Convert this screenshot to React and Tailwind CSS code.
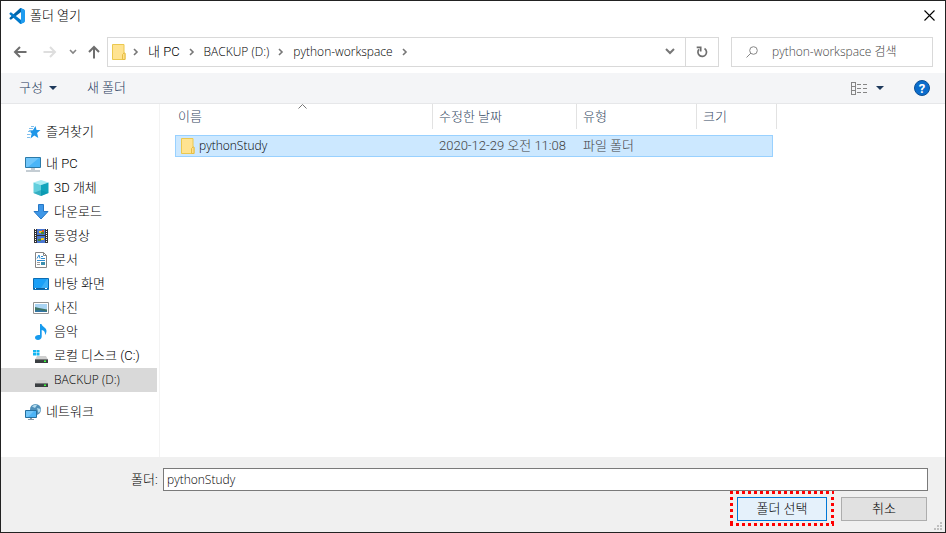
import React from "react";

const VsCodeLogo = () => (
  <svg width="16" height="16" viewBox="0 0 100 100" aria-hidden="true">
    <path d="M96 11 76 1c-2-1-5-1-7 1L4 61c-2 2-2 4 0 6l5 5c1 1 4 2 5 0l78-59c3-2 4-2 4-2z" fill="#0065a9" />
    <path d="M96 89 76 99c-2 1-5 1-7-1L4 39c-2-2-2-4 0-6l5-5c1-1 4-2 5 0l78 59c3 2 4 2 4 2z" fill="#007acc" />
    <path d="M76 99c-2 1-5 1-7-1 2 2 6 1 6-3V5c0-4-4-5-6-3 2-2 5-2 7-1l20 10c2 1 4 3 4 6v66c0 3-2 5-4 6z" fill="#1f9cf0" />
  </svg>
);

const Arrow = ({ className, d }) => (
  <svg width="14" height="14" viewBox="0 0 14 14" fill="none" stroke="currentColor" strokeWidth="2" className={className} aria-hidden="true">
    <path d={d} />
  </svg>
);

const Crumb = () => (
  <svg width="6" height="8" viewBox="0 0 6 8" fill="none" stroke="#777" strokeWidth="1.6" className="shrink-0" aria-hidden="true">
    <path d="M1 1l3 3-3 3" />
  </svg>
);

const Caret = () => (
  <svg width="8" height="4" viewBox="0 0 8 4" fill="#1e395b" aria-hidden="true">
    <path d="M0 0h8L4 4z" />
  </svg>
);

const Folder = () => (
  <svg width="14" height="16" viewBox="0 0 14 16" className="shrink-0" aria-hidden="true">
    <path d="M.5.5h11.500v9h1v6H.5z" fill="#ffe391" stroke="#ebc84f" />
    <path d="M10.500 15.500V10.500l1.500-1.500h1v6.500z" fill="#ffe08a" stroke="#e6bd42" />
  </svg>
);

const Icon = ({ children }) => (
  <svg width="16" height="16" viewBox="0 0 16 16" className="shrink-0" aria-hidden="true">{children}</svg>
);

const Drive = () => (
  <>
    <path d="M4 8h9l2 3.500H2z" fill="#cfcfcf" />
    <path d="M2 11h13v4H2z" fill="#3b3f42" />
    <path d="M2 11h13v1H2z" fill="#77797b" />
    <path d="M11 12.500h2v1.500h-2z" fill="#3cff3c" />
  </>
);

const icons = {
  star: (
    <Icon>
      <path d="M10.500 2l1 4 4 0-3.400 3 1.200 5-4-2.500L5.500 14.500l1.200-5-3-3 4.200-.3z" fill="#1e96e8" />
      <path d="M4 4.500h4M3 7.500h3M2 10.500h3.500M6 2.500h3M2 13.500h3" stroke="#7fbfec" />
    </Icon>
  ),
  pc: (
    <Icon>
      <path d="M.5 1.500h15v10H.5z" fill="#4bb5f7" stroke="#2c7aa8" />
      <path d="M1 2h13L3 11H1z" fill="#8ad2fb" opacity=".6" />
      <path d="M1 15h14M6 13h4" stroke="#8a9ba8" />
    </Icon>
  ),
  cube: (
    <Icon>
      <path d="M8 0l7.500 2.500L8 5 .5 2.500z" fill="#a9ecf4" />
      <path d="M.5 2.500L8 5v11L.5 13z" fill="#63cfdd" />
      <path d="M15.500 2.500L8 5v11l7.500-3z" fill="#12a5bc" />
      <path d="M.5 13L8 10l7.500 3L8 16z" fill="#078fa8" opacity=".5" />
    </Icon>
  ),
  download: (
    <Icon>
      <path d="M5.500.5h5v7h4.500L8 15 1 7.500h4.500z" fill="#3e97e8" stroke="#2677c5" />
    </Icon>
  ),
  video: (
    <Icon>
      <path d="M1 1h14v14H1z" fill="#333" />
      <path d="M2.500 1v14M13.500 1v14" stroke="#fff" strokeDasharray="1 1" />
      <path d="M4 1h8v6H4zM4 8h8v7H4z" fill="#4a76d0" />
      <path d="M6 3h3v2H6zM8 10h3v2H8z" fill="#f3c722" />
      <path d="M8 4h3v2H8zM5 11h3v2H5z" fill="#4b8a2d" />
      <path d="M9 2h2v2H9z" fill="#d9532c" />
    </Icon>
  ),
  doc: (
    <Icon>
      <path d="M2.500.5h8l3 3v12h-11z" fill="#fff" stroke="#858585" />
      <path d="M10.500.5v3h3" fill="none" stroke="#858585" />
      <path d="M4 6.500L6 3l1 3.500M8 4.500h2M8 6.500h4M4 8.500h8" fill="none" stroke="#2e8bd0" />
      <path d="M4 10.500h3M4 12.500h3" stroke="#999" />
      <path d="M8 10h4v3H8z" fill="#3d8fae" />
    </Icon>
  ),
  desktop: (
    <Icon>
      <path d="M.5 2.500h15v11H.5z" fill="#1ba0f7" stroke="#0b6cb3" />
      <path d="M1 12.500h14" stroke="#0f5f9c" />
      <path d="M2 12.500h1M12 12.500h2" stroke="#fff" />
      <path d="M8 12L14 3h1v9z" fill="#54baf9" opacity=".6" />
    </Icon>
  ),
  picture: (
    <Icon>
      <path d="M.5 2.500h15v11H.5z" fill="#fff" stroke="#929292" />
      <path d="M2 4h12v8H2z" fill="#a9d4f3" />
      <path d="M2 7l4 1 8 1.500V12H2z" fill="#3f7465" />
      <path d="M2 10.500l5-.5 7 1.500v.5H2z" fill="#3275a5" />
    </Icon>
  ),
  music: (
    <Icon>
      <path d="M7 0h1.500c.5 2.500 5 3.500 5 7 0 1.500-.7 3-1.500 4 .4-3-1-4.500-3.300-5v6.500C8.700 14.500 7 16 5 16s-3-1-3-2.500S3.500 11 5.500 11H7z" fill="#179bee" />
    </Icon>
  ),
  system: (
    <Icon>
      <Drive />
      <path d="M0 2h3v2.500H0zM3.500 2H6.500v2.500H3.500zM0 5h3v2.500H0zM3.500 5H6.500v2.500H3.500z" fill="#13b6f2" />
    </Icon>
  ),
  drive: <Icon><Drive /></Icon>,
  network: (
    <Icon>
      <circle cx="10.500" cy="5.500" r="5.500" fill="#4f8fb8" />
      <path d="M7 2.500c2-2 4-2 5-1.500L10 4zM12 4l3.500 1c0 2-1 3-2 4z" fill="#b3dcee" />
      <path d="M.5 6.500h11v7H.5z" fill="#4db4f6" stroke="#246f9f" />
      <path d="M1 7h8l-6 6H1z" fill="#8bd2fb" opacity=".6" />
      <path d="M3 15.500h6M5 14.500h2" stroke="#8a9ba8" />
    </Icon>
  ),
};

const latin = "font-['Open_Sans','Noto_Sans_CJK_KR',sans-serif] text-xs";

const groups = [
  [{ icon: "star", label: "즐겨찾기" }],
  [
    { icon: "pc", label: "내 PC" },
    { icon: "cube", label: "3D 개체", child: true },
    { icon: "download", label: "다운로드", child: true },
    { icon: "video", label: "동영상", child: true },
    { icon: "doc", label: "문서", child: true },
    { icon: "desktop", label: "바탕 화면", child: true },
    { icon: "picture", label: "사진", child: true },
    { icon: "music", label: "음악", child: true },
    { icon: "system", label: "로컬 디스크 (C:)", child: true },
    { icon: "drive", label: "BACKUP (D:)", child: true, selected: true },
  ],
  [{ icon: "network", label: "네트워크" }],
];

function TreeItem({ icon, label, child, selected }) {
  return (
    <li>
      <a
        href="#"
        aria-current={selected ? "true" : undefined}
        className={`flex h-6 items-center gap-[5px] whitespace-nowrap ${child ? "pl-8" : "pl-6"} ${selected ? `bg-[#d9d9d9] ${latin}` : ""}`}
      >
        {icons[icon]}
        <span>{label}</span>
      </a>
    </li>
  );
}

function TitleBar() {
  return (
    <header className="flex h-[29px] items-center gap-[5px] pl-2 pr-2">
      <VsCodeLogo />
      <h1 className="flex-1 font-light">폴더 열기</h1>
      <button type="button" aria-label="닫기" className="flex size-4 items-center justify-center">
        <svg width="11" height="11" viewBox="0 0 11 11" stroke="#000" strokeWidth="1.100" aria-hidden="true">
          <path d="M.5.5l10 10M10.500.5l-10 10" />
        </svg>
      </button>
    </header>
  );
}

function NavBar() {
  return (
    <nav className="flex h-[43px] items-center pl-3 pr-3">
      <div className="flex w-[94px] shrink-0 items-center">
        <button type="button" aria-label="뒤로" className="mr-4 text-[#6e6e6e]">
          <Arrow d="M13.500 7H2M7 2L2 7l5 5" />
        </button>
        <button type="button" aria-label="앞으로" className="mr-3 text-[#dedede]">
          <Arrow d="M.5 7H12M7 2l5 5-5 5" />
        </button>
        <button type="button" aria-label="최근 위치" className="mr-[10px]">
          <svg width="8" height="6" viewBox="0 0 8 6" fill="none" stroke="#858585" strokeWidth="1.600" aria-hidden="true">
            <path d="M1 1l3 3 3-3" />
          </svg>
        </button>
        <button type="button" aria-label="위로" className="text-[#6e6e6e]">
          <Arrow d="M7 13.500V2M2 7l5-5 5 5" />
        </button>
      </div>
      <div className="flex h-[30px] min-w-0 flex-1 items-center border border-[#d9d9d9] pl-1 text-black">
        <Folder />
        <div className="flex min-w-0 flex-1 items-center gap-[9px] whitespace-nowrap pl-[7px]">
          <Crumb />
          <button type="button">내 PC</button>
          <Crumb />
          <button type="button" className={latin}>BACKUP (D:)</button>
          <Crumb />
          <button type="button" className={latin}>python-workspace</button>
          <Crumb />
        </div>
        <button type="button" aria-label="이전 위치" className="mr-[10px]">
          <svg width="10" height="7" viewBox="0 0 10 7" fill="none" stroke="#777" strokeWidth="2" aria-hidden="true">
            <path d="M1 1l4 4 4-4" />
          </svg>
        </button>
        <button type="button" aria-label="새로 고침" className="flex h-full w-[33px] items-center justify-center border-l border-[#d9d9d9]">
          <svg width="12" height="12" viewBox="0 0 12 12" fill="none" stroke="#6e6e6e" strokeWidth="1.700" aria-hidden="true">
            <path d="M8.500 2.500A4.300 4.300 0 1 1 3 3.300" />
            <path d="M3 1.200h4v4" transform="translate(-2.300 .2)" />
          </svg>
        </button>
      </div>
      <label className={`ml-3 flex h-[30px] w-[202px] shrink-0 items-center gap-[14px] border border-[#d9d9d9] pl-[14px] ${latin}`}>
        <svg width="12" height="12" viewBox="0 0 12 12" fill="none" stroke="#878787" className="shrink-0" aria-hidden="true">
          <circle cx="7.500" cy="4.500" r="3.800" />
          <path d="M5 7L.5 11.500" />
        </svg>
        <input type="search" aria-label="검색" placeholder="python-workspace 검색" className="w-full min-w-0 outline-none placeholder:text-[#444]" />
      </label>
    </nav>
  );
}

function Toolbar() {
  return (
    <div className="flex h-[31px] items-center border-b border-[#e6e7e9] bg-[#f4f5f7] pl-[18px] pr-[15px] text-[#1e395b]">
      <button type="button" className="mr-[30px] flex items-center gap-[6px]">
        구성 <Caret />
      </button>
      <button type="button">새 폴더</button>
      <div className="ml-auto flex items-center">
        <button type="button" aria-label="보기 변경" className="flex items-center gap-[9px]">
          <svg width="16" height="13" viewBox="0 0 16 13" fill="none" stroke="#858585" shapeRendering="crispEdges" aria-hidden="true">
            <path d="M.5.5h4v12h-4zM.5 4.500h4M.5 8.500h4M6 2.500h4M12 2.500h4M6 6.500h4M12 6.500h4M6 10.500h4M12 10.500h4" />
          </svg>
          <Caret />
        </button>
        <button type="button" aria-label="도움말" className="ml-[30px] flex size-4 items-center justify-center rounded-full border border-[#0b4f94] bg-[#0a6ccc] text-[13px] font-bold leading-none text-white">
          ?
        </button>
      </div>
    </div>
  );
}

function HeaderCell({ children, colSpan, first }) {
  return (
    <th colSpan={colSpan} className="p-0 pb-[6px] text-left font-light text-[#33475f]">
      <div className={`relative flex h-[25px] items-center border-r border-[#e2e2e2] ${first ? "pl-[3px]" : "pl-[6px]"}`}>
        {children}
        {first && (
          <svg width="9" height="5" viewBox="0 0 9 5" fill="none" stroke="#777" className="absolute left-1/2 top-0 -ml-[6px]" aria-hidden="true">
            <path d="M.5 4.500l4-4 4 4" />
          </svg>
        )}
      </div>
    </th>
  );
}

function FileTable() {
  const cell = "h-[22px] border-y border-[#99d1ff] bg-[#cce8ff] p-0 text-[#444]";
  return (
    <table className="w-[602px] table-fixed border-separate border-spacing-0 whitespace-nowrap">
      <colgroup>
        <col className="w-[258px]" />
        <col className="w-[144px]" />
        <col className="w-[120px]" />
        <col className="w-[76px]" />
        <col className="w-1" />
      </colgroup>
      <thead>
        <tr>
          <HeaderCell first>이름</HeaderCell>
          <HeaderCell>수정한 날짜</HeaderCell>
          <HeaderCell>유형</HeaderCell>
          <HeaderCell colSpan={2}>크기</HeaderCell>
        </tr>
      </thead>
      <tbody>
        <tr>
          <td className={`${cell} border-l`}>
            <div className={`flex items-center gap-1 pl-[5px] ${latin} leading-5 text-black`}>
              <Folder />
              pythonStudy
            </div>
          </td>
          <td className={`${cell} pl-[6px]`}>2020-12-29 오전 11:08</td>
          <td className={`${cell} pl-[6px]`}>파일 폴더</td>
          <td className={`${cell} border-r`} />
        </tr>
      </tbody>
    </table>
  );
}

function Footer() {
  return (
    <footer className="relative h-[75px] bg-[#f0f0f0] pl-[130px] pr-[17px] pt-[11px]">
      <div className="flex items-center">
        <label htmlFor="folder" className="w-8 shrink-0">폴더:</label>
        <input id="folder" type="text" defaultValue="pythonStudy" className={`h-[23px] min-w-0 flex-1 border border-[#7a7a7a] bg-white px-[3px] outline-none ${latin}`} />
      </div>
      <div className="mt-[6px] flex justify-end gap-[14px] pr-px">
        <div className="relative">
          <button type="button" className="h-6 w-[90px] border border-[#0078d7] bg-[#e5f1fb]">폴더 선택</button>
          <svg width="104" height="35" viewBox="0 0 104 35" fill="none" stroke="#f00" strokeWidth="3" className="pointer-events-none absolute -left-[7px] -top-[6px]" aria-hidden="true">
            <path d="M0 1.500h104M0 33.500h104M1.500 6v28M102.500 6v28" strokeDasharray="3 3" />
          </svg>
        </div>
        <button type="button" className="h-6 w-[86px] border border-[#adadad] bg-[#e1e1e1]">취소</button>
      </div>
      <svg width="8" height="8" viewBox="0 0 8 8" fill="#bfbfbf" className="absolute bottom-[2px] right-[3px]" aria-hidden="true">
        <path d="M6 0h2v2H6zM3 3h2v2H3zM6 3h2v2H6zM0 6h2v2H0zM3 6h2v2H3zM6 6h2v2H6z" />
      </svg>
    </footer>
  );
}

export default function App() {
  return (
    <div className="flex min-h-screen w-full flex-col border border-[#222] bg-white font-[Roboto,'Noto_Sans_CJK_KR',sans-serif] text-[13px] font-light leading-5 text-black">
      <TitleBar />
      <NavBar />
      <Toolbar />
      <main className="flex flex-1">
        <aside className="w-[159px] shrink-0 border-r border-[#f3f3f3] pr-[2px] pt-4">
          {groups.map((items, i) => (
            <ul key={i} className="mb-2">
              {items.map((item) => (
                <TreeItem key={item.label} {...item} />
              ))}
            </ul>
          ))}
        </aside>
        <section className="min-w-0 flex-1 pl-[15px]">
          <FileTable />
        </section>
      </main>
      <Footer />
    </div>
  );
}
